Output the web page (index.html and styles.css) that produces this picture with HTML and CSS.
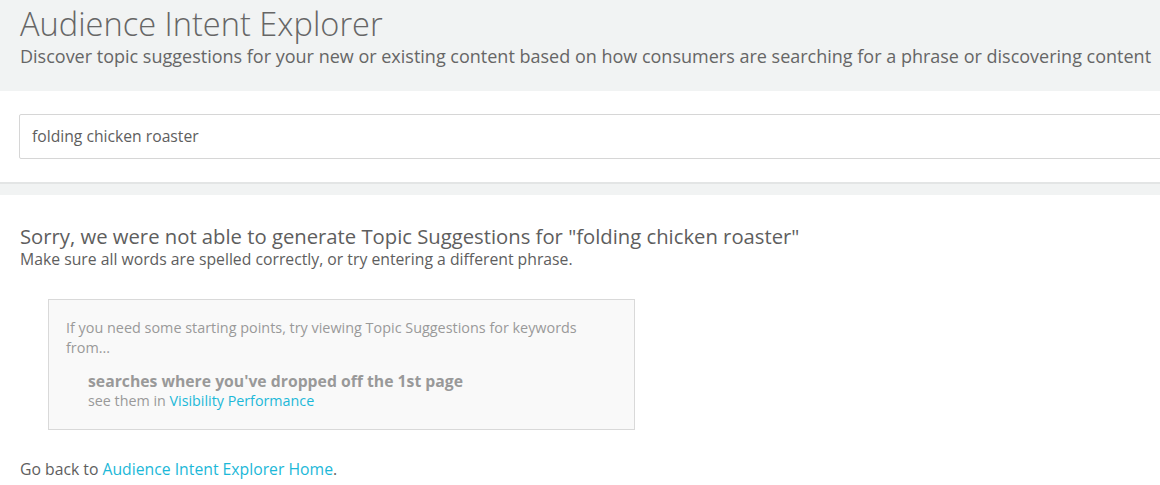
FILE: index.html
```html
<!DOCTYPE html>
<html>
<head>
<meta charset="utf-8">
<link rel="stylesheet" href="styles.css">
</head>
<body>
<div class="page">
  <header class="hero">
    <h1 class="title">Audience Intent Explorer</h1>
    <p class="subtitle">Discover topic suggestions for your new or existing content based on how consumers are searching for a phrase or discovering content</p>
  </header>
  <section class="search">
    <div class="search-box">folding chicken roaster</div>
  </section>
  <div class="divider"></div>
  <main class="content">
    <h2 class="sorry">Sorry, we were not able to generate Topic Suggestions for "folding chicken roaster"</h2>
    <p class="hint">Make sure all words are spelled correctly, or try entering a different phrase.</p>
    <div class="panel">
      <p class="panel-intro">If you need some starting points, try viewing Topic Suggestions for keywords from...</p>
      <div class="panel-item">
        <div class="item-title">searches where you've dropped off the 1st page</div>
        <div class="item-sub">see them in <a class="link" href="#">Visibility Performance</a></div>
      </div>
    </div>
    <p class="back">Go back to <a class="link" href="#">Audience Intent Explorer Home</a>.</p>
  </main>
</div>
</body>
</html>
```
FILE: styles.css
```css
* { box-sizing: border-box; }
html, body { margin: 0; padding: 0; }
body {
  font-family: "Open Sans", "Liberation Sans", sans-serif;
  color: #5e5e5e;
  background: #fff;
  overflow: hidden;
  width: 1160px;
  height: 485px;
}
.page { width: 1200px; }
.hero {
  background: #f1f3f3;
  padding: 4px 20px 0 20px;
  height: 91px;
}
.title {
  margin: 0;
  font-size: 32.6px;
  font-weight: 300;
  line-height: 40px;
  color: #666;
}
.subtitle {
  margin: 0;
  font-size: 18px;
  line-height: 24px;
  color: #666;
}
.search {
  padding: 23px 0 23px 19px;
}
.search-box {
  height: 45px;
  border: 1px solid #d6d6d6;
  border-radius: 2px;
  padding: 0 12px;
  font-size: 15.7px;
  line-height: 43px;
  color: #5e5e5e;
  width: 1200px;
}
.divider {
  height: 13px;
  background: #f1f3f3;
  border-top: 2px solid #e3e5e5;
}
.content {
  padding: 28px 20px 0 20px;
}
.sorry {
  margin: 0;
  font-size: 20.25px;
  font-weight: 400;
  line-height: 26px;
  color: #5e5e5e;
}
.hint {
  margin: 0;
  font-size: 15.75px;
  line-height: 20px;
  color: #5e5e5e;
}
.panel {
  margin: 30px 0 0 28px;
  width: 587px;
  border: 1px solid #d9d9d9;
  background: #f9f9f9;
  padding: 18px 17px 18px 17px;
  color: #999;
}
.panel-intro {
  margin: 0;
  font-size: 14.4px;
  line-height: 20px;
}
.panel-item {
  margin: 13px 0 0 22px;
}
.item-title {
  font-size: 15.75px;
  font-weight: 700;
  line-height: 20px;
}
.item-sub {
  font-size: 14.3px;
  line-height: 20px;
}
.link {
  color: #1cb8d8;
  text-decoration: none;
}
.back {
  margin: 29px 0 0 0;
  font-size: 15.75px;
  line-height: 20px;
  color: #5e5e5e;
}
```
